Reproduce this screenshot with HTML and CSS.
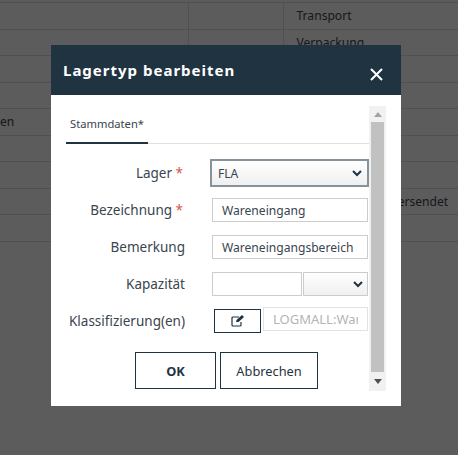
FILE: index.html
```html
<!DOCTYPE html>
<html lang="de">
<head>
  <meta charset="UTF-8">
  <title>Lagertyp bearbeiten</title>
  <link rel="stylesheet" href="styles.css">
</head>
<body>
<table class="bg-table">
  <tr><td></td><td></td><td>Transport</td></tr>
  <tr><td></td><td></td><td>Verpackung</td></tr>
  <tr><td></td><td></td><td></td></tr>
  <tr><td></td><td></td><td></td></tr>
  <tr><td class="cut">en</td><td></td><td></td></tr>
  <tr><td></td><td></td><td></td></tr>
  <tr><td></td><td></td><td></td></tr>
  <tr><td></td><td></td><td class="cut-right">versendet</td></tr>
  <tr><td></td><td></td><td></td></tr>
</table>

<div class="overlay"></div>

<div class="modal">
  <div class="modal-header">
    <h2>Lagertyp bearbeiten</h2>
    <svg class="close" width="13" height="13" viewBox="0 0 13 13"><path d="M1 1l11 11M12 1L1 12" stroke="#fff" stroke-width="2" fill="none"/></svg>
  </div>
  <div class="modal-body">
    <div class="scroll-area">
      <div class="tabs"><div class="tab">Stammdaten*</div></div>

      <div class="form-row">
        <label>Lager <span class="req">*</span></label>
        <div class="field select-focus"><span>FLA</span>
          <svg width="10" height="7" viewBox="0 0 10 7"><path d="M1 1l4 4 4-4" stroke="#1f3341" stroke-width="2" fill="none"/></svg>
        </div>
      </div>
      <div class="form-row">
        <label>Bezeichnung <span class="req">*</span></label>
        <input class="field" value="Wareneingang">
      </div>
      <div class="form-row">
        <label>Bemerkung</label>
        <input class="field" value="Wareneingangsbereich">
      </div>
      <div class="form-row">
        <label>Kapazität</label>
        <div class="split">
          <input class="field amount">
          <div class="field unit">
            <svg width="10" height="7" viewBox="0 0 10 7"><path d="M1 1l4 4 4-4" stroke="#1f3341" stroke-width="2" fill="none"/></svg>
          </div>
        </div>
      </div>
      <div class="form-row">
        <label>Klassifizierung(en)</label>
        <div class="split">
          <button class="edit-btn">
            <svg width="14" height="12" viewBox="0 0 14 12"><path d="M10 7v3a1 1 0 0 1-1 1H2a1 1 0 0 1-1-1V3a1 1 0 0 1 1-1h6" stroke="#1f3341" stroke-width="1.2" fill="none"/><path d="M5 7l.5-2L11 0l2 2-5.500 5z" fill="#1f3341"/></svg>
          </button>
          <input class="field disabled" value="LOGMALL:Wareneingang" disabled>
        </div>
      </div>

      <div class="actions">
        <button class="btn primary">OK</button>
        <button class="btn">Abbrechen</button>
      </div>
    </div>

    <div class="scrollbar">
      <svg width="8" height="5" viewBox="0 0 8 5"><path d="M0 5l4-5 4 5z" fill="#a3a3a3"/></svg>
      <div class="thumb"></div>
      <svg width="8" height="5" viewBox="0 0 8 5"><path d="M0 0l4 5 4-5z" fill="#505050"/></svg>
    </div>
  </div>
</div>
</body>
</html>
```
FILE: styles.css
```css
* {
  margin: 0;
  padding: 0;
  box-sizing: border-box;
}

html, body {
  height: 100%;
  overflow: hidden;
}

body {
  font-family: "Noto Sans", sans-serif;
  font-size: 13.5px;
  color: #39454f;
  background: #fff;
}

/* Tabelle im Hintergrund */
.bg-table {
  width: 100%;
  margin-top: 2px;
  border-collapse: collapse;
  table-layout: fixed;
  font-size: 12.1px;
}

.bg-table td {
  height: 26.55px;
  border-top: 1px solid #ddd;
  border-bottom: 1px solid #ddd;
  padding: 0 13px;
  white-space: nowrap;
  overflow: hidden;
}

.bg-table td:nth-child(1) { width: 188px; }
.bg-table td:nth-child(2) { width: 95px; border-left: 1px solid #ddd; }
.bg-table td:nth-child(3) { border-left: 1px solid #ddd; }

.bg-table .cut { padding-left: 0; }
.bg-table .cut-right { padding-left: 108px; }

.overlay {
  position: fixed;
  inset: 0;
  background: rgba(0, 0, 0, 0.64);
}

/* Dialog */
.modal {
  position: fixed;
  left: 51px;
  top: 45px;
  width: 350px;
  height: 361px;
  background: #fff;
  display: flex;
  flex-direction: column;
}

.modal-header {
  height: 50px;
  flex-shrink: 0;
  background: #1f3341;
  color: #fff;
  display: flex;
  align-items: flex-start;
  justify-content: space-between;
  padding: 0 18px 0 12px;
}

.modal-header h2 {
  font-size: 15px;
  font-weight: 700;
  letter-spacing: 1px;
  line-height: 51px;
}

.close { margin-top: 23px; }

.modal-body {
  flex: 1;
  display: flex;
  padding: 11px 0 0 15px;
  min-height: 0;
}

.scroll-area {
  width: 303px;
  flex-shrink: 0;
}

.tabs {
  height: 38px;
  border-bottom: 1px solid #e0e0e0;
}

.tab {
  width: 82px;
  height: 38px;
  border-bottom: 2px solid #1f3341;
  font-size: 11.2px;
  text-align: center;
  padding-top: 10px;
}

.form-row {
  display: flex;
  align-items: center;
  height: 24px;
  margin-bottom: 13px;
}

.tabs + .form-row { margin-top: 17px; }

.form-row label {
  width: 146px;
  flex-shrink: 0;
  text-align: right;
  padding-right: 27px;
  white-space: nowrap;
}

.form-row label .req {
  margin-right: 2px;
  color: #d9534f;
}

.field {
  width: 156px;
  height: 24px;
  border: 1px solid #ccc;
  background: #fff;
  font: inherit;
  font-size: 12.1px;
  color: inherit;
  padding: 0 9px;
  display: flex;
  align-items: center;
  justify-content: space-between;
  outline: none;
}

.select-focus {
  flex-shrink: 0;
  width: 159px;
  height: 28px;
  margin-left: -2px;
  border: 2px solid #87939c;
  background: linear-gradient(#fff, #efefef);
  padding: 0 5px 0 6px;
}

.split {
  display: flex;
  width: 156px;
}

.amount { width: 90px; }

.unit {
  width: 65px;
  margin-left: 1px;
  background: linear-gradient(#fff, #f0f0f0);
  justify-content: flex-end;
  padding-right: 4px;
}

.edit-btn {
  width: 47px;
  height: 24px;
  margin: 0 2px;
  flex-shrink: 0;
  background: #fff;
  border: 1px solid #1f3341;
  display: flex;
  align-items: center;
  justify-content: center;
}

.disabled {
  width: 105px;
  margin-top: -2px;
  border-color: #e3e3e3;
  color: #b5b5b5;
  font-size: 13px;
}

.actions {
  display: flex;
  gap: 4px;
  margin-top: 19px;
  padding-left: 69px;
}

.btn {
  width: 81px;
  height: 37px;
  background: #fff;
  border: 1px solid #1f3341;
  font: inherit;
  font-size: 12.8px;
  color: #1f3341;
}

.btn.primary { font-weight: 700; }

.btn:last-child { width: 98px; }

.scrollbar {
  width: 17px;
  height: 285px;
  background: #f1f1f1;
  display: flex;
  flex-direction: column;
  align-items: center;
  justify-content: space-between;
  padding: 6px 0 7px;
}

.thumb {
  width: 13px;
  flex: 1;
  margin: 5px 0 7px;
  background: #c1c1c1;
}
```
